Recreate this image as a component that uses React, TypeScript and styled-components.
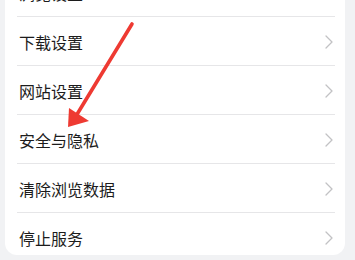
import React from "react";
import styled, { createGlobalStyle } from "styled-components";

const Global = createGlobalStyle`
  html, body { margin: 0; padding: 0; background: #f1f2f4; }
  body { width: 355px; height: 260px; overflow: hidden; }
`;

const Page = styled.div`
  position: relative;
  width: 355px;
  height: 260px;
  overflow: hidden;
  background: #f1f2f4;
  padding: 0 10px 0 5px;
  box-sizing: border-box;
`;

const Card = styled.div`
  margin-top: -32px;
  background: #ffffff;
  border-radius: 12px;
  display: flex;
  flex-direction: column;
  overflow: hidden;
`;

const Row = styled.div<{ $last?: boolean }>`
  position: relative;
  display: flex;
  align-items: center;
  justify-content: space-between;
  height: ${(p) => (p.$last ? "42px" : "49px")};
  padding: ${(p) => (p.$last ? "8px 12px 0 14px" : "0 12px 0 14px")};
  box-sizing: border-box;
  &::after {
    content: "";
    display: ${(p) => (p.$last ? "none" : "block")};
    position: absolute;
    left: 12px;
    right: 10px;
    bottom: 0;
    height: 1px;
    background: #e6e6e8;
  }
`;

const Label = styled.span`
  font-family: "Noto Sans CJK SC", "Noto Sans", sans-serif;
  font-size: 16px;
  color: #1c1c1c;
  letter-spacing: 0px;
`;

const Chevron = () => (
  <svg width="8" height="14" viewBox="0 0 8 14">
    <polyline points="1,1 7,7 1,13" fill="none" stroke="#c2c2c4" strokeWidth="1.3" strokeLinecap="round" strokeLinejoin="round" />
  </svg>
);

const Overlay = styled.svg`
  position: absolute;
  left: 0;
  top: 0;
  pointer-events: none;
`;

const items = ["浏览设置", "下载设置", "网站设置", "安全与隐私", "清除浏览数据", "停止服务"];

export default function App() {
  return (
    <>
      <Global />
      <Page>
        <Card>
          {items.map((t, i) => (
            <Row key={t} $last={i === items.length - 1}>
              <Label>{t}</Label>
              <Chevron />
            </Row>
          ))}
        </Card>
        <Overlay width="355" height="260" viewBox="0 0 355 260">
          <line x1="132" y1="24" x2="76" y2="116" stroke="#ee3a32" strokeWidth="3.6" strokeLinecap="round" />
          <polygon points="68,127 69,108 89,121" fill="#ee3a32" />
        </Overlay>
      </Page>
    </>
  );
}
